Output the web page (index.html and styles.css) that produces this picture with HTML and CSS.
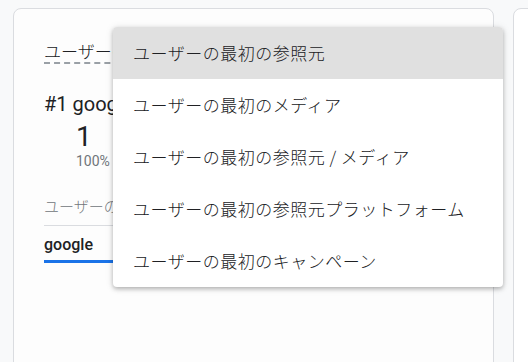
FILE: index.html
```html
<!DOCTYPE html>
<html lang="ja">
<head>
  <meta charset="UTF-8" />
  <meta name="viewport" content="width=device-width, initial-scale=1.0"/>
  <title>ユーザーの最初の参照元</title>
  <link rel="stylesheet" href="styles.css">
</head>
<body>
  <div class="cards">
    <div class="card">
      <div class="card-title">ユーザーの最初の参照元</div>

      <div class="top-item">#1 google</div>
      <div class="top-value">1</div>
      <div class="top-percent">100%</div>

      <div class="dim-label">ユーザーの最初の参照元</div>
      <div class="tabs">
        <div class="tab active">google</div>
      </div>

      <div class="menu">
        <div class="menu-item selected">ユーザーの最初の参照元</div>
        <div class="menu-item">ユーザーの最初のメディア</div>
        <div class="menu-item">ユーザーの最初の参照元 / メディア</div>
        <div class="menu-item">ユーザーの最初の参照元プラットフォーム</div>
        <div class="menu-item">ユーザーの最初のキャンペーン</div>
      </div>
    </div>

    <div class="card card-next"></div>
  </div>
</body>
</html>
```

FILE: styles.css
```css
body {
  margin: 0;
  background: #f8f9fa;
  font-family: Roboto, "Noto Sans CJK JP", sans-serif;
  color: #3c4043;
  overflow: hidden;
}

.cards {
  display: flex;
  gap: 19px;
  padding: 8px 0 0 13px;
}

.card {
  position: relative;
  flex: none;
  width: 419px;
  height: 400px;
  padding: 30px;
  background: #fdfdfd;
  border: 1px solid #dadce0;
  border-radius: 8px;
}

.card-next {
  width: 40px;
  background: #fff;
}

.card-title {
  display: inline-block;
  margin-top: 3px;
  font-size: 17px;
  font-weight: 300;
  line-height: 20px;
  color: #202124;
  border-bottom: 2px dashed #9aa0a6;
}

.top-item {
  margin-top: 28px;
  font-size: 20px;
  line-height: 24px;
  color: #202124;
}

.top-value {
  margin-left: 32px;
  margin-top: 5px;
  font-size: 28px;
  line-height: 32px;
  color: #202124;
}

.top-percent {
  margin-left: 32px;
  font-size: 14px;
  line-height: 16px;
  color: #70757a;
}

.dim-label {
  margin-top: 28px;
  font-size: 15px;
  font-weight: 300;
  line-height: 20px;
  color: #70757a;
  padding-bottom: 8px;
  border-bottom: 1px solid #dadce0;
}

.tabs {
  display: flex;
}

.tab {
  padding: 9px 0 6px;
  font-size: 16px;
  font-weight: 500;
  line-height: 19px;
  color: #202124;
  width: 120px;
}

.tab.active {
  border-bottom: 3px solid #1a73e8;
}

.menu {
  position: absolute;
  left: 99px;
  top: 18px;
  width: 390px;
  background: #fff;
  border-radius: 4px;
  box-shadow: 0 2px 4px rgba(0, 0, 0, 0.25), 0 1px 8px rgba(0, 0, 0, 0.1);
  overflow: hidden;
}

.menu-item {
  height: 52px;
  line-height: 52px;
  padding: 0 20px;
  font-family: "Noto Sans CJK JP", sans-serif;
  font-size: 17px;
  font-weight: 300;
  letter-spacing: 0.5px;
  color: #202124;
  white-space: nowrap;
}

.menu-item.selected {
  background: #e0e0e0;
}
```
